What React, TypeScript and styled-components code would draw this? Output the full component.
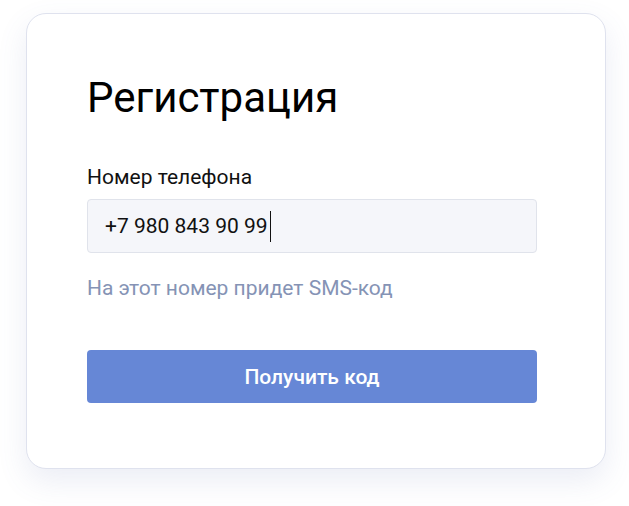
import styled, { createGlobalStyle } from "styled-components";

const GlobalStyle = createGlobalStyle`
  body {
    margin: 0;
    background: #ffffff;
    font-family: Roboto, "Liberation Sans", sans-serif;
  }
`;

export default function App() {
  return (
    <Page>
      <GlobalStyle />
      <Card>
        <Title>Регистрация</Title>
        <Field>
          <Label>Номер телефона</Label>
          <PhoneInput>
            +7 980 843 90 99
            <Caret />
          </PhoneInput>
        </Field>
        <Hint>На этот номер придет SMS-код</Hint>
        <SubmitButton>Получить код</SubmitButton>
      </Card>
    </Page>
  );
}

const Page = styled.main`
  width: 100%;
  min-height: 506px;
  display: flex;
  align-items: flex-start;
  padding: 13px 0 0 26px;
  box-sizing: border-box;
`;

const Card = styled.section`
  width: 580px;
  box-sizing: border-box;
  padding: 59px 68px 65px 60px;
  background: #ffffff;
  border: 1px solid #dfe2ee;
  border-radius: 20px;
  box-shadow: 0 12px 30px rgba(90, 110, 170, 0.12);
  display: flex;
  flex-direction: column;
`;

const Title = styled.h1`
  margin: 0 0 42px;
  font-size: 42px;
  font-weight: 400;
  line-height: 50px;
  color: #000000;
`;

const Field = styled.div`
  display: flex;
  flex-direction: column;
  gap: 10px;
`;

const Label = styled.label`
  font-size: 21px;
  line-height: 24px;
  color: #111111;
`;

const PhoneInput = styled.div`
  height: 54px;
  box-sizing: border-box;
  padding: 0 17px;
  display: flex;
  align-items: center;
  background: #f5f6fa;
  border: 1px solid #e0e3eb;
  border-radius: 4px;
  font-size: 21px;
  color: #111111;
`;

const Caret = styled.span`
  display: inline-block;
  width: 1.5px;
  height: 31px;
  margin-left: 2px;
  background: #111111;
`;

const Hint = styled.p`
  margin: 23px 0 0;
  font-size: 21px;
  line-height: 24px;
  color: #8593b5;
`;

const SubmitButton = styled.button`
  margin-top: 50px;
  height: 53px;
  border: none;
  border-radius: 4px;
  background: #6687d6;
  color: #ffffff;
  font-family: inherit;
  font-size: 21px;
  font-weight: 500;
  cursor: pointer;
`;
